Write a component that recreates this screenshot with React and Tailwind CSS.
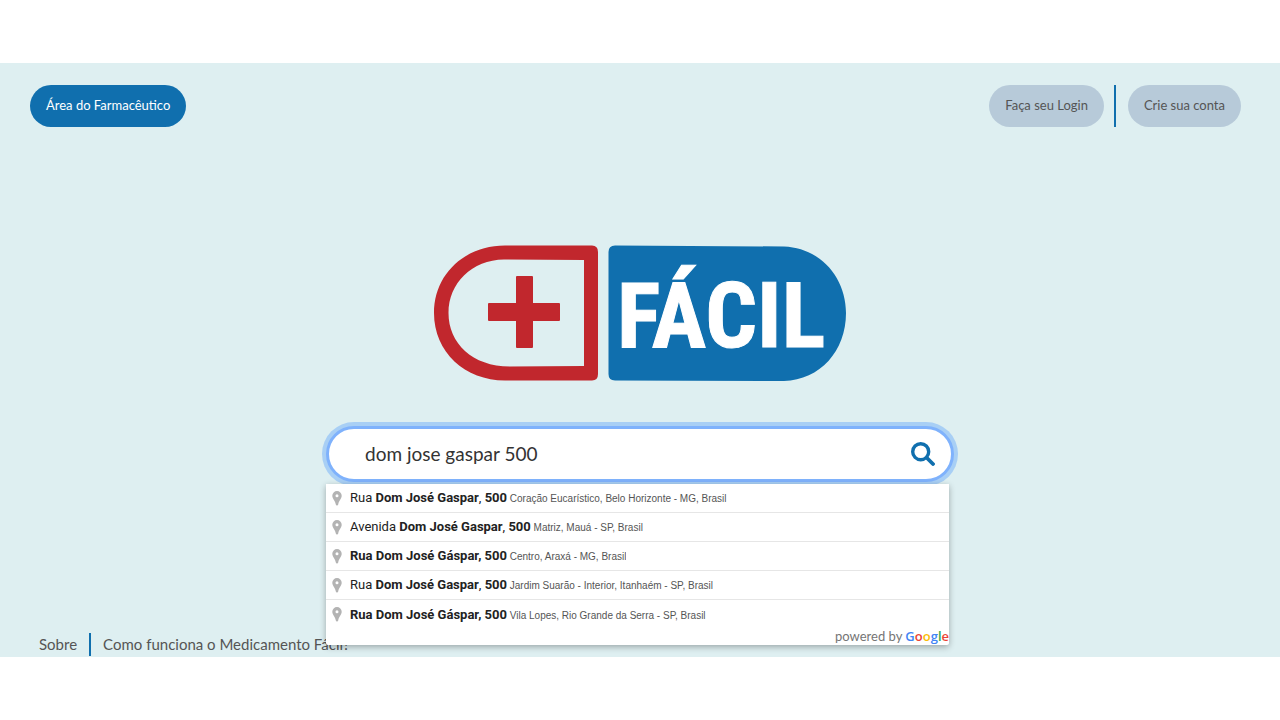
import { useState } from "react";

const suggestions = [
  { id: 1, parts: [["Rua "], ["Dom José Gaspar", true], [", "], ["500", true]], place: "Coração Eucarístico, Belo Horizonte - MG, Brasil" },
  { id: 2, parts: [["Avenida "], ["Dom José Gaspar", true], [", "], ["500", true]], place: "Matriz, Mauá - SP, Brasil" },
  { id: 3, parts: [["Rua Dom José Gáspar, 500", true]], place: "Centro, Araxá - MG, Brasil" },
  { id: 4, parts: [["Rua "], ["Dom José Gaspar", true], [", "], ["500", true]], place: "Jardim Suarão - Interior, Itanhaém - SP, Brasil" },
  { id: 5, parts: [["Rua Dom José Gáspar, 500", true]], place: "Vila Lopes, Rio Grande da Serra - SP, Brasil" },
];

function Logo() {
  return (
    <svg viewBox="0 0 412 136" className="w-[412px] max-w-full" role="img" aria-label="Mais Fácil">
      <path
        fill="#c1272d"
        fillRule="evenodd"
        d="M71 0.5H158Q164 0.5 164 7V129Q164 135.5 158 135.5H71C31 135.5 0 107 0 68C0 29 31 0.5 71 0.5ZM70 14.5C38 15 14.500 38 14.500 68C14.500 98 38 121.500 76 121.500L150 121V15Z"
      />
      <path
        fill="#c1272d"
        d="M83 31H98Q99 31 99 32V58H125Q126 58 126 59V75Q126 76 125 76H99V102Q99 103 98 103H83Q82 103 82 102V76H55Q54 76 54 75V59Q54 58 55 58H82V32Q82 31 83 31Z"
      />
      <path
        fill="#106fae"
        d="M181 0.500L350 1.500C387 3 412 33 412 68C412 106 386 135 350 136L181 135.500Q174.500 135.500 174.500 129V7Q174.500 0.500 181 0.500Z"
      />
      <text x="183" y="102" fill="#fff" stroke="#fff" strokeWidth="1" fontSize="91" fontWeight="700" fontFamily="'Liberation Sans Narrow', 'Roboto Condensed', 'Liberation Sans', sans-serif">
        FÁCIL
      </text>
    </svg>
  );
}

function SearchIcon() {
  return (
    <svg viewBox="0 0 24 24" className="size-6" fill="none" stroke="#106fae" strokeLinecap="round" aria-hidden="true">
      <circle cx="9.700" cy="9.700" r="8" strokeWidth="3.400" />
      <path d="M16 16L22 22" strokeWidth="3.800" />
    </svg>
  );
}

function PinIcon() {
  return (
    <svg viewBox="0 0 10 15" className="h-[15px] w-[10px] shrink-0" aria-hidden="true">
      <path
        fill="#b3b3b3"
        fillRule="evenodd"
        d="M5 0A4.700 4.700 0 0 1 9.700 4.700C9.700 7.900 6.900 9 6.200 13.500Q6 14.600 5 14.600Q4 14.600 3.800 13.500C3.100 9 0.300 7.900 0.300 4.700A4.700 4.700 0 0 1 5 0ZM5 3.200A1.500 1.500 0 1 0 5 6.200A1.500 1.500 0 1 0 5 3.200Z"
      />
    </svg>
  );
}

function Suggestions() {
  return (
    <div className="absolute top-[55px] right-0.5 -left-[3px] z-10 rounded-b-xs bg-white shadow-[0_2px_6px_rgba(0,0,0,0.3)]">
      <ul className="divide-y divide-[#e6e6e6]" aria-label="Sugestões de endereço">
        {suggestions.map((s) => (
          <li key={s.id} className="flex h-[29px] items-center gap-2 px-1.5">
            <PinIcon />
            <span className="truncate font-['Liberation_Sans',sans-serif] text-[10px] text-[#555]">
              <span className="font-['Roboto',sans-serif] text-[13px] text-[#222]">
                {s.parts.map(([text, bold]) => (bold ? <b key={text}>{text}</b> : text))}
              </span>{" "}
              {s.place}
            </span>
          </li>
        ))}
      </ul>
      <p className="flex h-4 items-center justify-end gap-[3px] font-['Lato',sans-serif] text-[13px] text-[#757575]">
        powered by
        <span className="font-['Open_Sans',sans-serif] font-semibold">
          <span className="text-[#4285f4]">G</span>
          <span className="text-[#ea4335]">o</span>
          <span className="text-[#fbbc05]">o</span>
          <span className="text-[#4285f4]">g</span>
          <span className="text-[#34a853]">l</span>
          <span className="text-[#ea4335]">e</span>
        </span>
      </p>
    </div>
  );
}

export default function App() {
  const [query, setQuery] = useState("dom jose gaspar 500");
  return (
    <div className="flex min-h-screen flex-col bg-white py-[63px] font-['Lato',sans-serif] text-[#555]">
      <div className="flex flex-1 flex-col bg-[#deeff1]">
        <header className="flex items-center justify-between pt-[22px] pr-[39px] pl-[30px] text-[13px]">
          <a href="#farmaceutico" className="flex h-[42px] items-center rounded-full bg-[#106fae] px-4 text-white">
            Área do Farmacêutico
          </a>
          <nav className="flex items-center">
            <a href="#login" className="flex h-[42px] items-center rounded-full bg-[#b7cad9] px-4">
              Faça seu Login
            </a>
            <span className="mr-3 ml-2.5 h-[42px] w-0.5 bg-[#106fae]" />
            <a href="#conta" className="flex h-[42px] items-center rounded-full bg-[#b7cad9] px-4">
              Crie sua conta
            </a>
          </nav>
        </header>

        <main className="flex flex-1 flex-col items-center pt-[118px]">
          <h1>
            <Logo />
          </h1>
          <form
            role="search"
            onSubmit={(e) => e.preventDefault()}
            className="relative mt-[45px] flex h-14 w-full max-w-[628px] items-center rounded-[28px] border-[3px] border-[#7fb2fc] bg-white pr-4 pl-9 ring-4 ring-[#a8cff5]"
          >
            <input
              type="text"
              aria-label="Endereço"
              value={query}
              onChange={(e) => setQuery(e.target.value)}
              className="min-w-0 flex-1 bg-transparent text-[19px] text-[#333] outline-none"
            />
            <button type="submit" aria-label="Buscar">
              <SearchIcon />
            </button>
            <Suggestions />
          </form>
        </main>

        <footer className="flex items-center pb-px pl-[39px] text-[15px]">
          <a href="#sobre">Sobre</a>
          <span className="mr-3 ml-3 h-[23px] w-0.5 bg-[#106fae]" />
          <a href="#como-funciona">Como funciona o Medicamento Fácil?</a>
        </footer>
      </div>
    </div>
  );
}
